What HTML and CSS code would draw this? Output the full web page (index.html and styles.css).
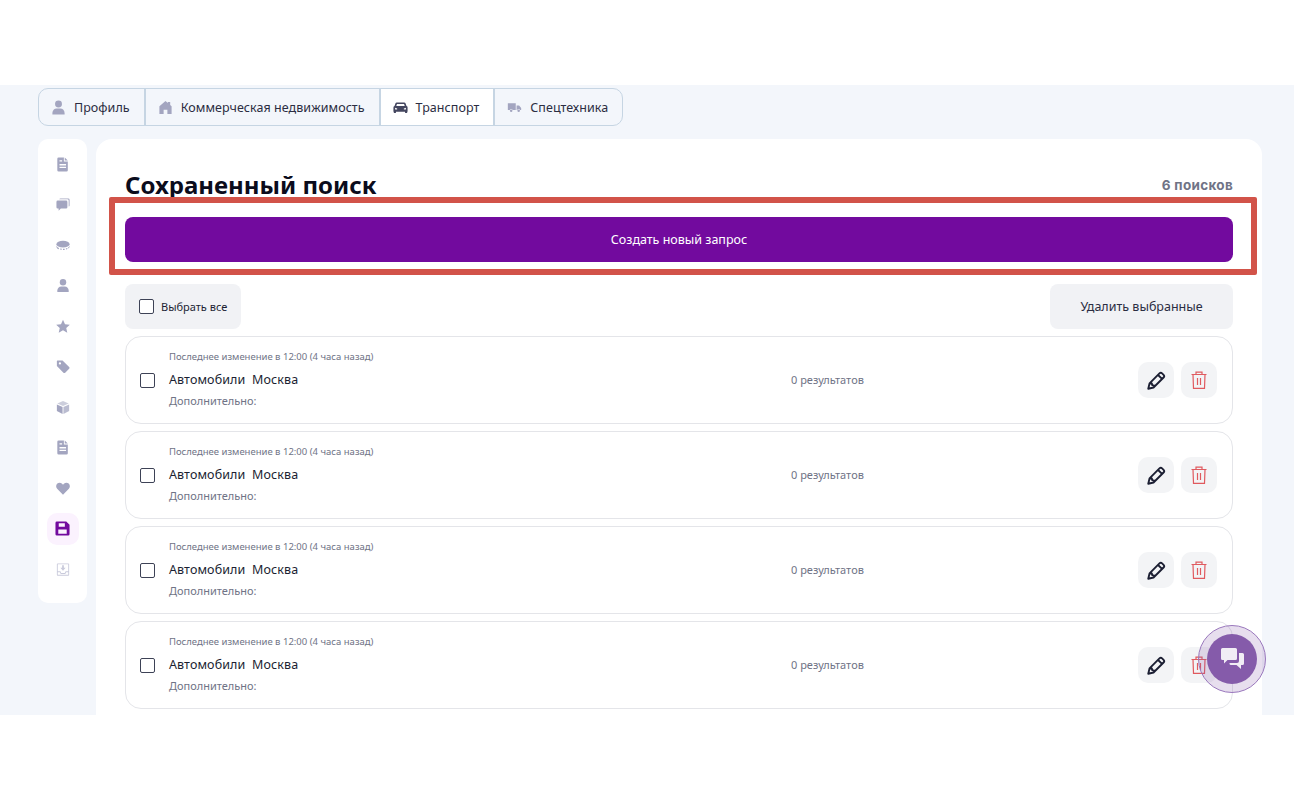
FILE: index.html
```html
<!DOCTYPE html>
<html lang="ru">
<head>
    <meta charset="UTF-8">
    <title>Сохраненный поиск</title>
    <link rel="stylesheet" href="styles.css">
</head>
<body>
    <svg class="sprite" width="0" height="0">
        <symbol id="i-doc" viewBox="0 0 16 16"><path fill-rule="evenodd" d="M3 0h6v4.500h4.500V14.500a1.500 1.500 0 0 1-1.500 1.500H3a1.500 1.500 0 0 1-1.500-1.500V1.500A1.500 1.500 0 0 1 3 0zM10 0l3.500 3.500H10zM4 7.500v1.500h7.500V7.500zM4 10.500V12h7.500v-1.500zM4 3v1.500h3V3z"/></symbol>
        <symbol id="i-comments" viewBox="0 0 16 16"><path d="M5 1h9a1.500 1.500 0 0 1 1.500 1.500V9a1.500 1.500 0 0 1-1 1.400V3.500A1.500 1.500 0 0 0 13 2H3.700A1.500 1.500 0 0 1 5 1z"/><path d="M2 3.500h9.500A1.500 1.500 0 0 1 13 5v6a1.500 1.500 0 0 1-1.500 1.500H5.500L3 15v-2.500H2A1.500 1.500 0 0 1 .5 11V5A1.500 1.500 0 0 1 2 3.500z"/></symbol>
        <symbol id="i-coin" viewBox="0 0 16 16"><ellipse cx="8" cy="6.500" rx="7.500" ry="3.800"/><path d="M.5 8c.6 1.500 2 2.500 3 2.900l-.5 1.400C1.800 11.800.5 10.500.5 9zM5 11.300l1.700.3-.2 1.300-1.900-.3zM8 11.700h1.800l.1 1.300H8zM11.200 11.400l1.500-.6.500 1.300-1.700.6zM13.800 10.300c.8-.6 1.500-1.300 1.700-2.300v1c0 1.200-.8 2.100-1.300 2.500z"/></symbol>
        <symbol id="i-user" viewBox="0 0 16 16"><circle cx="8" cy="4.200" r="3.700"/><path d="M1.500 15.500v-1.700C1.500 10.900 3.500 9 6 9h4c2.500 0 4.500 1.900 4.500 4.800v1.700z"/></symbol>
        <symbol id="i-star" viewBox="0 0 16 16"><path d="M8 .4l2.300 5 5.500.6-4.100 3.700 1.200 5.400L8 12.300l-4.900 2.800 1.200-5.400L.2 6l5.500-.6z"/></symbol>
        <symbol id="i-tag" viewBox="0 0 16 16"><path fill-rule="evenodd" d="M1.500 1h6l7.500 7.500a1.400 1.400 0 0 1 0 2l-4.500 4.500a1.400 1.400 0 0 1-2 0L1 7.500v-5A1.500 1.500 0 0 1 1.500 1zM4.500 3.200a1.300 1.300 0 1 0 0 2.600 1.300 1.300 0 0 0 0-2.600z"/></symbol>
        <symbol id="i-box" viewBox="0 0 16 16"><path d="M8 .5l6.500 3L8 6.300 1.500 3.500z" opacity=".55"/><path d="M1 4.600l6.500 2.800v8L1 12z"/><path d="M15 4.600L8.500 7.400v8L15 12z" opacity=".75"/></symbol>
        <symbol id="i-heart" viewBox="0 0 16 16"><path d="M8 15L1.300 8.300C-.3 6.600-.2 3.900 1.500 2.400c1.600-1.400 4-1.200 5.500.3l1 1 1-1c1.500-1.500 3.900-1.700 5.500-.3 1.700 1.500 1.800 4.200.2 5.900z"/></symbol>
        <symbol id="i-save" viewBox="0 0 16 16"><path fill-rule="evenodd" d="M2 .5h10L15.500 4v10a1.500 1.500 0 0 1-1.500 1.500H2A1.500 1.500 0 0 1 .5 14V2A1.500 1.500 0 0 1 2 .5zM4 2.500V6h6.500V2.500zM3.500 9v4.500h9V9z"/></symbol>
        <symbol id="i-inbox" viewBox="0 0 16 16"><path fill-rule="evenodd" d="M2 1h12a1 1 0 0 1 1 1v12a1 1 0 0 1-1 1H2a1 1 0 0 1-1-1V2a1 1 0 0 1 1-1zM2 2v8h3l1 2h4l1-2h3V2zM2 11v3h12v-3h-2.400l-1 2H5.400l-1-2z"/><path d="M7 3h2v3h2L8 9.500 5 6h2z"/></symbol>
        <symbol id="i-home" viewBox="0 0 16 16"><path d="M8 1l2.500 2.200V2h2.500v3.400l1.500 1.300V15H10v-4.500H6V15H1.500V6.700z"/></symbol>
        <symbol id="i-car" viewBox="0 0 18 16"><path fill-rule="evenodd" d="M4.500 2h9c.7 0 1.300.4 1.500 1l1.200 3.300c.9.300 1.300 1 1.300 1.900V13h-.5v1.500h-2.500V13H3.500v1.500H1V13H.5V8.200c0-.9.500-1.600 1.300-1.900L3 3c.2-.6.800-1 1.500-1zM4.800 3.800L3.900 6.200h10.200l-.9-2.400zM2.500 8.300v2h2.500v-1zM15.500 8.300l-2.500 1v1h2.500z"/></symbol>
        <symbol id="i-truck" viewBox="0 0 18 14"><path d="M1 2h9.500v8H6.800a2 2 0 0 0-3.600 0H1z"/><path d="M11.500 4.500h3L17 7.500V10h-1.200a2 2 0 0 0-3.600 0h-.7z"/><circle cx="5" cy="11" r="1.500"/><circle cx="14" cy="11" r="1.500"/></symbol>
        <symbol id="i-pencil" viewBox="0 0 18 18"><path fill="none" stroke="currentColor" stroke-width="1.800" stroke-linejoin="round" d="M1.200 16.800l1.200-5L11.800 2.300a1.800 1.800 0 0 1 2.500 0l1.400 1.400a1.800 1.800 0 0 1 0 2.500L6.200 15.600zM10.500 3.800l3.700 3.700M3 11.600l1.600.2.300 1.600 1.600.3.200 1.600"/></symbol>
        <symbol id="i-trash" viewBox="0 0 16 18"><path fill="none" stroke="currentColor" stroke-width="1.200" d="M.5 3.500h15M5 3.500V1.200h6v2.300M2 3.500l.5 13.900h11L14 3.500M6.500 7v7M9.500 7v7"/></symbol>
        <symbol id="i-chat" viewBox="0 0 23 22"><path d="M1.500 0h13A1.500 1.500 0 0 1 16 1.500v9a1.500 1.500 0 0 1-1.500 1.500H6.500L3 15.500V12H1.500A1.500 1.500 0 0 1 0 10.500v-9A1.500 1.500 0 0 1 1.500 0z"/><path d="M18 5h3.500A1.500 1.500 0 0 1 23 6.500v9a1.500 1.500 0 0 1-1.500 1.500H20v4l-4.500-4H10a1.500 1.500 0 0 1-1.500-1.500V15h7.500a2 2 0 0 0 2-2z"/></symbol>
    </svg>

    <div class="blank-top"></div>

    <div class="app">
        <nav class="tabs">
            <a class="tab"><svg class="tab-icon"><use href="#i-user"/></svg>Профиль</a>
            <a class="tab"><svg class="tab-icon"><use href="#i-home"/></svg>Коммерческая недвижимость</a>
            <a class="tab tab-active"><svg class="tab-icon"><use href="#i-car"/></svg>Транспорт</a>
            <a class="tab"><svg class="tab-icon"><use href="#i-truck"/></svg>Спецтехника</a>
        </nav>

        <div class="columns">
            <aside class="sidebar">
                <a class="side-item"><svg><use href="#i-doc"/></svg></a>
                <a class="side-item"><svg><use href="#i-comments"/></svg></a>
                <a class="side-item"><svg><use href="#i-coin"/></svg></a>
                <a class="side-item"><svg><use href="#i-user"/></svg></a>
                <a class="side-item"><svg><use href="#i-star"/></svg></a>
                <a class="side-item"><svg><use href="#i-tag"/></svg></a>
                <a class="side-item"><svg><use href="#i-box"/></svg></a>
                <a class="side-item"><svg><use href="#i-doc"/></svg></a>
                <a class="side-item"><svg><use href="#i-heart"/></svg></a>
                <a class="side-item side-active"><svg><use href="#i-save"/></svg></a>
                <a class="side-item side-faded"><svg><use href="#i-inbox"/></svg></a>
            </aside>

            <main class="content">
                <div class="head">
                    <h1>Сохраненный поиск</h1>
                    <span class="count">6 поисков</span>
                </div>

                <button class="create-btn">Создать новый запрос</button>

                <div class="bulk">
                    <label class="select-all"><span class="check"></span>Выбрать все</label>
                    <button class="delete-btn">Удалить выбранные</button>
                </div>

                <div class="card">
                    <span class="check check-row"></span>
                    <div class="info">
                        <div class="changed">Последнее изменение в 12:00 (4 часа назад)</div>
                        <div class="name">Автомобили&nbsp; Москва</div>
                        <div class="extra">Дополнительно:</div>
                    </div>
                    <div class="results">0 результатов</div>
                    <div class="actions">
                        <button class="icon-btn"><svg class="pencil"><use href="#i-pencil"/></svg></button>
                        <button class="icon-btn"><svg class="trash"><use href="#i-trash"/></svg></button>
                    </div>
                </div>

                <div class="card">
                    <span class="check check-row"></span>
                    <div class="info">
                        <div class="changed">Последнее изменение в 12:00 (4 часа назад)</div>
                        <div class="name">Автомобили&nbsp; Москва</div>
                        <div class="extra">Дополнительно:</div>
                    </div>
                    <div class="results">0 результатов</div>
                    <div class="actions">
                        <button class="icon-btn"><svg class="pencil"><use href="#i-pencil"/></svg></button>
                        <button class="icon-btn"><svg class="trash"><use href="#i-trash"/></svg></button>
                    </div>
                </div>

                <div class="card">
                    <span class="check check-row"></span>
                    <div class="info">
                        <div class="changed">Последнее изменение в 12:00 (4 часа назад)</div>
                        <div class="name">Автомобили&nbsp; Москва</div>
                        <div class="extra">Дополнительно:</div>
                    </div>
                    <div class="results">0 результатов</div>
                    <div class="actions">
                        <button class="icon-btn"><svg class="pencil"><use href="#i-pencil"/></svg></button>
                        <button class="icon-btn"><svg class="trash"><use href="#i-trash"/></svg></button>
                    </div>
                </div>

                <div class="card">
                    <span class="check check-row"></span>
                    <div class="info">
                        <div class="changed">Последнее изменение в 12:00 (4 часа назад)</div>
                        <div class="name">Автомобили&nbsp; Москва</div>
                        <div class="extra">Дополнительно:</div>
                    </div>
                    <div class="results">0 результатов</div>
                    <div class="actions">
                        <button class="icon-btn"><svg class="pencil"><use href="#i-pencil"/></svg></button>
                        <button class="icon-btn"><svg class="trash"><use href="#i-trash"/></svg></button>
                    </div>
                </div>
            </main>
        </div>
    </div>

    <div class="highlight"></div>

    <button class="chat-fab"><svg><use href="#i-chat"/></svg></button>
</body>
</html>
```

FILE: styles.css
```css
* {
    box-sizing: border-box;
}

body {
    margin: 0;
    height: 800px;
    overflow: hidden;
    background: #fff;
    font-family: "Noto Sans", "Open Sans", sans-serif;
    color: #1c1f33;
}

.sprite {
    position: absolute;
}

.blank-top {
    height: 85px;
}

.app {
    height: 630px;
    overflow: hidden;
    background-color: #f3f6fb;
    padding: 3px 32px 0 38px;
}

/* Tabs */
.tabs {
    display: inline-flex;
    height: 38px;
    border: 1px solid #c6d5e3;
    border-radius: 10px;
    overflow: hidden;
}

.tab {
    display: flex;
    align-items: center;
    gap: 8px;
    padding: 0 14px 0 12px;
    font-size: 12.500px;
    letter-spacing: 0.05px;
    color: #2b2d42;
    border-left: 2px solid #c6d5e3;
}

.tab:first-child {
    border-left: none;
}

.tab-active {
    background: #fff;
}

.tab-icon {
    width: 15px;
    height: 15px;
    fill: #a3a5c0;
}

.tab-active .tab-icon {
    fill: #44465f;
}

/* Layout */
.columns {
    display: flex;
    gap: 9px;
    margin-top: 13px;
    align-items: flex-start;
}

.sidebar {
    width: 49px;
    height: 464px;
    flex: none;
    background: #fff;
    border-radius: 10px;
    padding-top: 9px;
    display: flex;
    flex-direction: column;
    align-items: center;
}

.side-item {
    width: 32px;
    height: 32px;
    margin-bottom: 8.500px;
    display: flex;
    align-items: center;
    justify-content: center;
    border-radius: 10px;
}

.side-item svg {
    width: 14px;
    height: 15px;
    fill: #a3a5c0;
}

.side-active {
    background-color: #fbf2fe;
}

.side-active svg {
    fill: #720a9e;
    width: 15px;
    height: 15px;
}

.side-faded svg {
    fill: #c9cadb;
}

.content {
    flex: 1;
    height: 600px;
    background: #fff;
    border-radius: 16px;
    padding: 28px 29px 0;
}

/* Head */
.head {
    display: flex;
    justify-content: space-between;
    align-items: center;
    height: 35px;
}

h1 {
    margin: 0;
    font-size: 24px;
    font-weight: 700;
    line-height: 33px;
    color: #0b0c1c;
}

.count {
    font-family: "Inter", sans-serif;
    font-size: 13.500px;
    font-weight: 700;
    letter-spacing: 0.3px;
    color: #6f7386;
}

.create-btn {
    display: block;
    width: 100%;
    height: 45px;
    margin-top: 15px;
    border: none;
    border-radius: 8px;
    background-color: #720a9e;
    color: #fff;
    font-family: inherit;
    font-size: 12.500px;
}

.bulk {
    display: flex;
    justify-content: space-between;
    margin-top: 22px;
    margin-bottom: 7px;
}

.select-all {
    display: flex;
    align-items: center;
    gap: 7px;
    width: 116px;
    height: 45px;
    padding: 0 0 1px 14px;
    border-radius: 8px;
    background: #f1f2f5;
    font-size: 11px;
}

.delete-btn {
    width: 183px;
    height: 45px;
    padding: 0 0 1px;
    border: none;
    border-radius: 8px;
    background: #f1f2f5;
    color: #2b2d42;
    font-family: inherit;
    font-size: 12.500px;
}

.check {
    display: block;
    flex: none;
    width: 15px;
    height: 15px;
    border: 1.500px solid #3d4256;
    border-radius: 2px;
    background: #fff;
}

/* Cards */
.card {
    display: flex;
    align-items: center;
    height: 88px;
    margin-bottom: 7px;
    padding: 0 15px 0 14px;
    border: 1px solid #e4e5e9;
    border-radius: 16px;
}

.info {
    width: 622px;
    margin-left: 14px;
    flex: none;
    padding-bottom: 2px;
}

.changed {
    font-size: 9.500px;
    line-height: 12px;
    color: #6f7386;
}

.name {
    margin-top: 8px;
    font-size: 12.500px;
    line-height: 17px;
    letter-spacing: 0.1px;
    color: #1c1f33;
}

.extra {
    margin-top: 5px;
    font-size: 11px;
    line-height: 15px;
    color: #6f7386;
}

.results {
    padding-bottom: 2px;
    font-size: 11px;
    color: #6f7386;
}

.actions {
    margin-left: auto;
    display: flex;
    gap: 7px;
}

.icon-btn {
    width: 36px;
    height: 36px;
    padding: 0;
    border: none;
    border-radius: 10px;
    background: #f3f4f6;
    display: flex;
    align-items: center;
    justify-content: center;
}

.pencil {
    width: 19px;
    height: 19px;
    color: #1c1f33;
}

.trash {
    width: 16px;
    height: 18px;
    color: #e05a5f;
}

/* Overlays */
.highlight {
    position: absolute;
    left: 109px;
    top: 197px;
    width: 1148px;
    height: 78px;
    border: 6px solid #d25349;
    border-radius: 2px;
}

.chat-fab {
    position: absolute;
    left: 1198px;
    top: 625px;
    width: 68px;
    height: 68px;
    padding: 0;
    border: 1px solid #9a78bd;
    border-radius: 50%;
    background: rgba(133, 91, 170, 0.2);
    display: flex;
    align-items: center;
    justify-content: center;
}

.chat-fab::before {
    content: "";
    position: absolute;
    width: 50px;
    height: 50px;
    border-radius: 50%;
    background-color: #855baa;
}

.chat-fab svg {
    position: relative;
    width: 23px;
    height: 22px;
    fill: #f1edf5;
}
```
